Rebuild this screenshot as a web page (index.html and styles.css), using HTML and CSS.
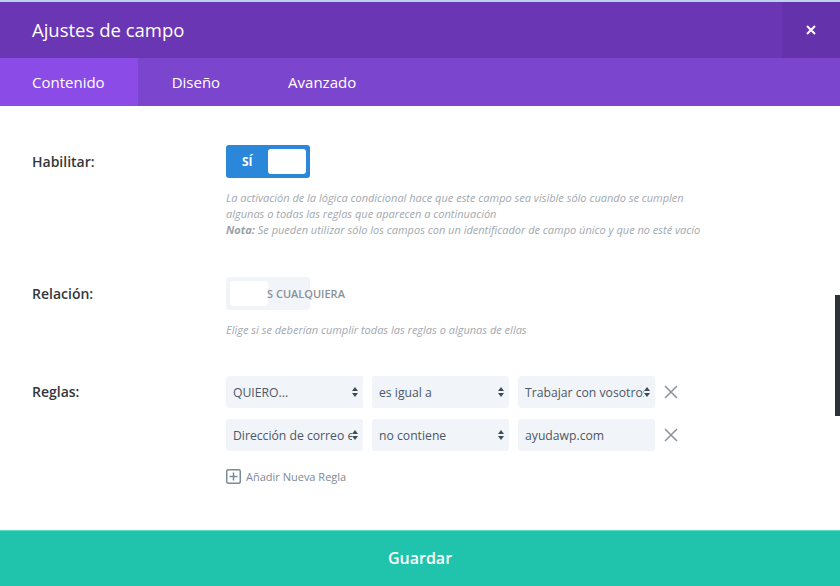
FILE: index.html
```html
<!DOCTYPE html>
<html lang="es">
<head>
    <meta charset="UTF-8">
    <title>Ajustes de campo</title>
    <link rel="stylesheet" href="styles.css">
</head>
<body>
    <div class="modal">
        <div class="modal-header">
            <h2 class="modal-title">Ajustes de campo</h2>
            <button class="close-btn">
                <svg width="10" height="10" viewBox="0 0 10 10"><path d="M1 1L9 9M9 1L1 9" stroke="#fff" stroke-width="2"/></svg>
            </button>
        </div>
        <div class="tabs">
            <div class="tab active">Contenido</div>
            <div class="tab">Diseño</div>
            <div class="tab">Avanzado</div>
        </div>

        <div class="modal-body">
            <div class="field">
                <div class="field-label">Habilitar:</div>
                <div class="field-control">
                    <div class="toggle on">
                        <span class="toggle-text">SÍ</span>
                        <span class="knob"></span>
                    </div>
                    <p class="desc">La activación de la lógica condicional hace que este campo sea visible sólo cuando se cumplen<br>algunas o todas las reglas que aparecen a continuación<br><b>Nota:</b> Se pueden utilizar sólo los campos con un identificador de campo único y que no esté vacío</p>
                </div>
            </div>

            <div class="field">
                <div class="field-label">Relación:</div>
                <div class="field-control">
                    <div class="toggle off">
                        <span class="knob"></span>
                        <span class="toggle-text">S CUALQUIERA</span>
                    </div>
                    <p class="desc">Elige si se deberían cumplir todas las reglas o algunas de ellas</p>
                </div>
            </div>

            <div class="field">
                <div class="field-label rules-label">Reglas:</div>
                <div class="field-control">
                    <div class="rule">
                        <div class="select"><span class="select-text">QUIERO...</span><span class="arrows"></span></div>
                        <div class="select"><span class="select-text">es igual a</span><span class="arrows"></span></div>
                        <div class="select"><span class="select-text">Trabajar con vosotros</span><span class="arrows"></span></div>
                        <span class="remove">
                            <svg width="14" height="14" viewBox="0 0 14 14"><path d="M1 1L13 13M13 1L1 13" stroke="#8a939c" stroke-width="1.5"/></svg>
                        </span>
                    </div>
                    <div class="rule">
                        <div class="select"><span class="select-text">Dirección de correo e</span><span class="arrows"></span></div>
                        <div class="select"><span class="select-text">no contiene</span><span class="arrows"></span></div>
                        <div class="select input"><span class="select-text">ayudawp.com</span></div>
                        <span class="remove">
                            <svg width="14" height="14" viewBox="0 0 14 14"><path d="M1 1L13 13M13 1L1 13" stroke="#8a939c" stroke-width="1.5"/></svg>
                        </span>
                    </div>
                    <div class="add-rule">
                        <svg width="15" height="15" viewBox="0 0 15 15"><rect x="0.75" y="0.75" width="13.5" height="13.5" rx="1.5" fill="none" stroke="#7b8a99" stroke-width="1.5"/><path d="M7.5 3.5V11.5M3.5 7.5H11.5" stroke="#7b8a99" stroke-width="1.5"/></svg>
                        <span>Añadir Nueva Regla</span>
                    </div>
                </div>
            </div>
        </div>

        <div class="modal-footer">Guardar</div>
    </div>
    <div class="scrollbar"></div>
</body>
</html>
```

FILE: styles.css
```css
body {
    margin: 0;
    font-family: "Open Sans", "Liberation Sans", sans-serif;
    background: #fff;
    overflow: hidden;
}
.modal {
    display: flex;
    flex-direction: column;
    height: 586px;
}
.modal-header {
    display: flex;
    align-items: stretch;
    height: 56px;
    border-top: 2px solid #bcd2e8;
    background-color: #6b36b4;
}
.modal-title {
    flex: 1;
    margin: 0;
    padding-left: 32px;
    font-size: 18.5px;
    font-weight: 400;
    line-height: 56px;
    color: #fff;
}
.close-btn {
    width: 58px;
    border: none;
    padding: 0;
    background-color: #6432aa;
    display: flex;
    align-items: center;
    justify-content: center;
}
.tabs {
    display: flex;
    height: 48px;
    background-color: #7c45cd;
}
.tab {
    padding: 0 34px;
    font-size: 15px;
    line-height: 48px;
    color: #fff;
}
.tab.active {
    background-color: #8b4be6;
    padding: 0 33px 0 32px;
}
.modal-body {
    flex: 1;
    padding: 39px 32px 0;
}
.field {
    display: flex;
    margin-bottom: 39px;
}
.field:nth-child(2) {
    margin-bottom: 38px;
}
.field-label {
    width: 194px;
    flex-shrink: 0;
    font-size: 14px;
    font-weight: 600;
    line-height: 33px;
    color: #32373c;
}
.rules-label {
    line-height: 32px;
}
.toggle {
    display: flex;
    align-items: center;
    width: 84px;
    height: 33px;
    box-sizing: border-box;
    padding: 4px;
    border-radius: 3px;
}
.toggle.on {
    background-color: #2b87da;
}
.toggle.off {
    background-color: #f1f5f9;
}
.toggle-text {
    font-size: 12px;
    font-weight: 700;
}
.toggle.on .toggle-text {
    color: #fff;
    padding-left: 12px;
    width: 30px;
}
.toggle.off .toggle-text {
    font-size: 11px;
    font-weight: 600;
    color: #8a9097;
    white-space: nowrap;
    margin-left: -1px;
}
.knob {
    width: 38px;
    height: 25px;
    border-radius: 3px;
    background: #fff;
    flex-shrink: 0;
}
.toggle.on .knob {
    margin-left: auto;
}
.desc {
    margin: 12px 0 0;
    font-size: 11px;
    font-style: italic;
    line-height: 16px;
    color: #a2a8b0;
    white-space: nowrap;
}
.desc b {
    font-weight: 700;
    color: #9aa1a9;
}
.rule {
    display: flex;
    align-items: center;
    gap: 9px;
    margin-bottom: 11px;
}
.select {
    position: relative;
    width: 137px;
    height: 32px;
    box-sizing: border-box;
    padding: 0 0 0 7px;
    border-radius: 3px;
    background-color: #f1f5f9;
    display: flex;
    align-items: center;
    overflow: hidden;
}
.select-text {
    font-size: 12.2px;
    color: #4c5866;
    white-space: nowrap;
}
.arrows {
    position: absolute;
    right: 0;
    top: 0;
    width: 11px;
    height: 32px;
    background-color: #f1f5f9;
}
.arrows::before,
.arrows::after {
    content: "";
    position: absolute;
    left: 0;
    border-left: 3px solid transparent;
    border-right: 3px solid transparent;
}
.arrows::before {
    top: 11px;
    border-bottom: 4px solid #3e4a55;
}
.arrows::after {
    top: 17px;
    border-top: 4px solid #3e4a55;
}
.remove {
    display: flex;
}
.add-rule {
    display: flex;
    align-items: center;
    gap: 5px;
    margin-top: 18px;
    font-size: 11px;
    color: #7b8a99;
}
.modal-footer {
    height: 55px;
    border-top: 1px solid #5fdcc8;
    background-color: #20c4ac;
    color: #fff;
    font-size: 16px;
    font-weight: 600;
    text-align: center;
    line-height: 55px;
}
.scrollbar {
    position: absolute;
    right: 0;
    top: 295px;
    width: 5px;
    height: 121px;
    background: #2e3338;
}
```
